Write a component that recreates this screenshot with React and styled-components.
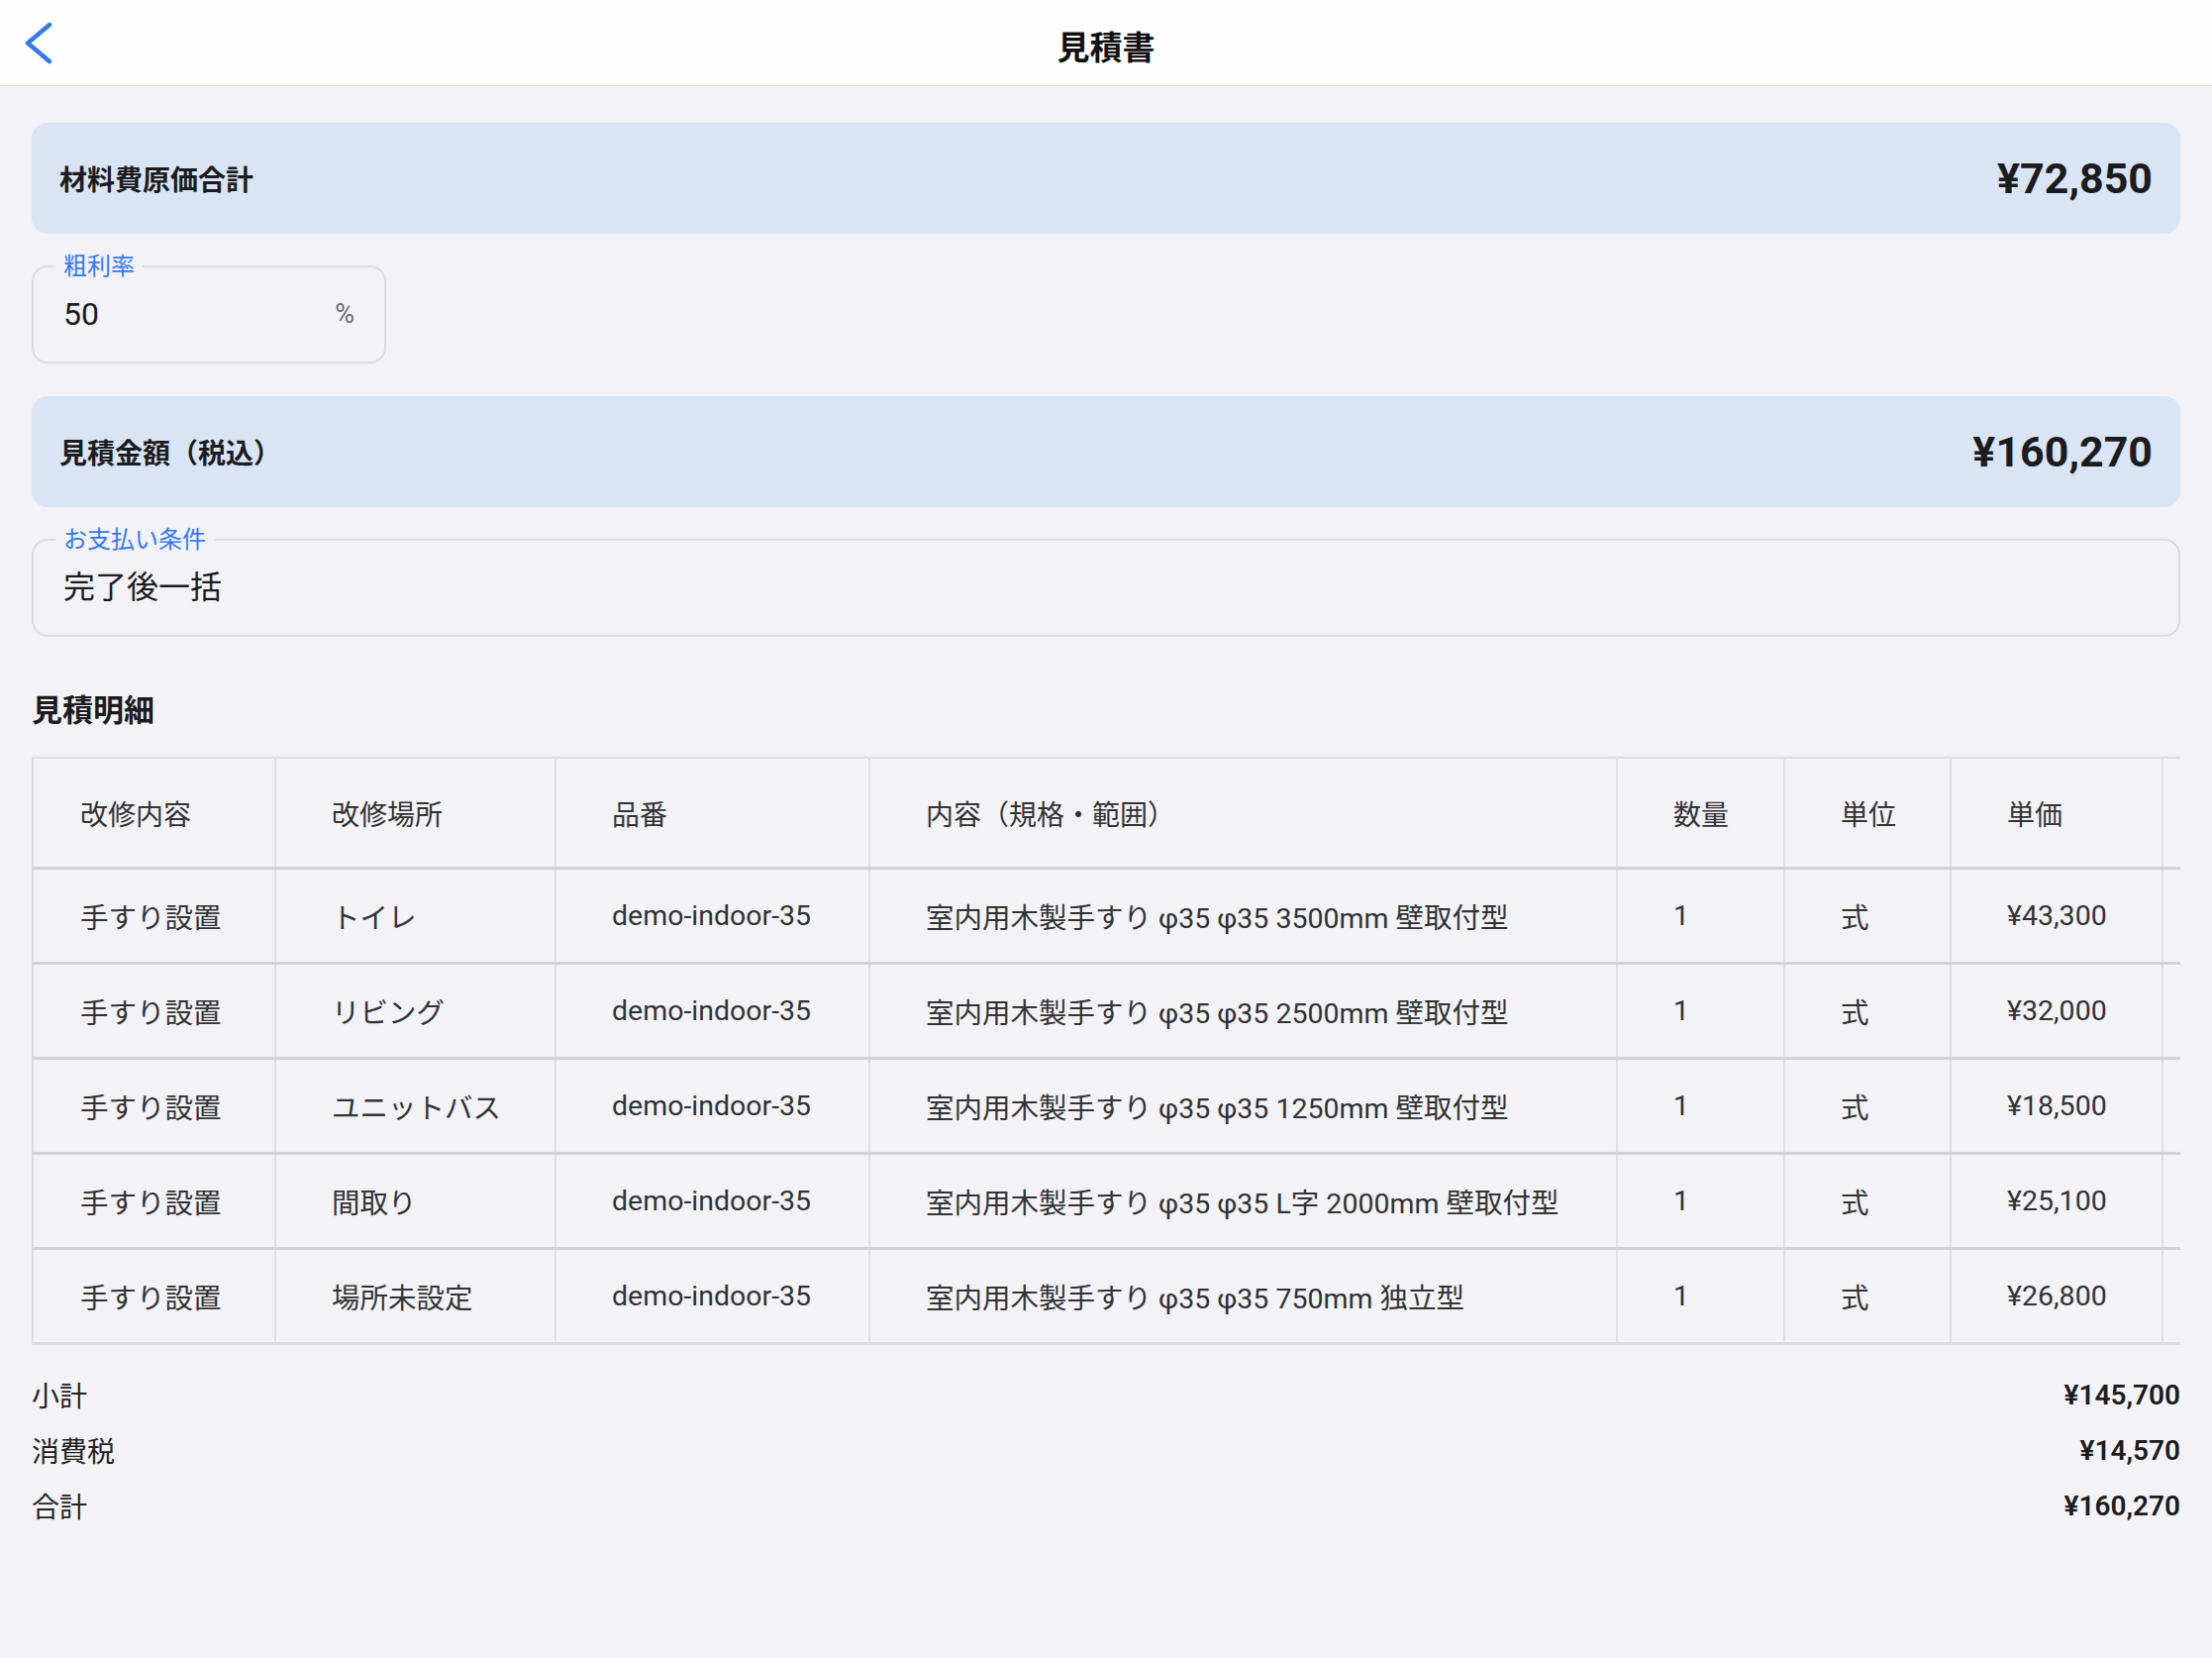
import React from "react";
import styled, { createGlobalStyle } from "styled-components";

const GlobalStyle = createGlobalStyle`
  body {
    margin: 0;
    background-color: #f2f2f7;
    font-family: Roboto, "Noto Sans CJK JP", sans-serif;
    color: #1c1c1e;
  }
`;

const Page = styled.div`
  min-height: 1674px;
  background-color: #f2f2f7;
`;

const Header = styled.header`
  display: grid;
  grid-template-columns: 1fr auto 1fr;
  align-items: center;
  height: 86px;
  padding: 0 24px;
  background-color: #fefefe;
  border-bottom: 1px solid #d6d6da;
`;

const BackButton = styled.button`
  justify-self: start;
  display: flex;
  padding: 0;
  border: none;
  background: none;
  cursor: pointer;
`;

const Title = styled.h1`
  margin: 0;
  padding-top: 6px;
  font-size: 33px;
  font-weight: 700;
  color: #111;
`;

const Content = styled.main`
  display: flex;
  flex-direction: column;
  padding: 37px 32px 0;
`;

const SummaryCard = styled.div`
  display: flex;
  justify-content: space-between;
  align-items: center;
  height: 112px;
  margin-top: ${props => props.top || 0}px;
  padding: 0 28px;
  border-radius: 16px;
  background-color: #d9e4f5;
`;

const CardLabel = styled.span`
  font-size: 28px;
  font-weight: 700;
  color: #1c1c1e;
`;

const CardValue = styled.span`
  font-size: 43px;
  font-weight: 700;
  color: #1c1c1e;
`;

const Field = styled.fieldset`
  width: ${props => props.width || "auto"};
  box-sizing: border-box;
  margin: ${props => props.top || 0}px 0 0;
  padding: 16px 22px 30px;
  min-inline-size: 0;
  border: 2px solid #dcdce0;
  border-radius: 16px;
`;

const FieldLabel = styled.legend`
  padding: 0 8px;
  font-size: 24px;
  line-height: 28px;
  color: #3478f6;
`;

const FieldValue = styled.div`
  display: flex;
  justify-content: space-between;
  align-items: center;
  padding: 0 8px;
  font-size: 32px;
  line-height: 36px;
  color: #1c1c1e;
`;

const Unit = styled.span`
  font-size: 27px;
  color: #6b6b70;
`;

const SectionTitle = styled.h2`
  margin: 55px 0 0;
  font-size: 31px;
  line-height: 40px;
  font-weight: 700;
  color: #1c1c1e;
`;

const TableScroll = styled.div`
  margin-top: 26px;
  overflow: hidden;
`;

const Table = styled.table`
  width: 2411px;
  table-layout: fixed;
  border-collapse: collapse;
  border-top: 2px solid #dcdce0;
  border-left: 2px solid #dcdce0;
`;

const HeadCell = styled.th`
  height: 109px;
  padding: 0 0 0 ${props => (props.first ? 47 : 56)}px;
  text-align: left;
  font-size: 28px;
  font-weight: 400;
  color: #333;
  border-right: 2px solid #e0e0e4;
  border-bottom: 3px solid #d1d1d6;
`;

const Cell = styled.td`
  height: 93px;
  padding: 0 0 0 ${props => (props.first ? 47 : 56)}px;
  font-size: 28.5px;
  color: #333;
  white-space: nowrap;
  border-right: 2px solid #e0e0e4;
  border-bottom: 3px solid ${props => (props.last ? "#dcdce0" : "#d1d1d6")};
`;

const Totals = styled.div`
  display: flex;
  flex-direction: column;
  margin-top: 22px;
`;

const TotalRow = styled.div`
  display: flex;
  justify-content: space-between;
  align-items: center;
  height: 56px;
  font-size: 28px;
`;

const TotalLabel = styled.span`
  color: #222;
`;

const TotalValue = styled.span`
  font-weight: 600;
  color: #1c1c1e;
`;

const columns = [
  { title: "改修内容", width: 245 },
  { title: "改修場所", width: 283 },
  { title: "品番", width: 317 },
  { title: "内容（規格・範囲）", width: 755 },
  { title: "数量", width: 169 },
  { title: "単位", width: 168 },
  { title: "単価", width: 214 },
  { title: "金額", width: 260 }
];

const rows = [
  ["手すり設置", "トイレ", "demo-indoor-35", "室内用木製手すり φ35 φ35 3500mm 壁取付型", "1", "式", "¥43,300", "¥43,300"],
  ["手すり設置", "リビング", "demo-indoor-35", "室内用木製手すり φ35 φ35 2500mm 壁取付型", "1", "式", "¥32,000", "¥32,000"],
  ["手すり設置", "ユニットバス", "demo-indoor-35", "室内用木製手すり φ35 φ35 1250mm 壁取付型", "1", "式", "¥18,500", "¥18,500"],
  ["手すり設置", "間取り", "demo-indoor-35", "室内用木製手すり φ35 φ35 L字 2000mm 壁取付型", "1", "式", "¥25,100", "¥25,100"],
  ["手すり設置", "場所未設定", "demo-indoor-35", "室内用木製手すり φ35 φ35 750mm 独立型", "1", "式", "¥26,800", "¥26,800"]
];

const totals = [
  ["小計", "¥145,700"],
  ["消費税", "¥14,570"],
  ["合計", "¥160,270"]
];

function ChevronLeft() {
  return (
    <svg width="30" height="44" viewBox="0 0 30 44">
      <polyline
        points="26,4 4,22.5 26,41"
        fill="none"
        stroke="#3478f6"
        strokeWidth="4.5"
        strokeLinecap="round"
        strokeLinejoin="round"
      />
    </svg>
  );
}

export default function App() {
  return (
    <Page>
      <GlobalStyle />
      <Header>
        <BackButton aria-label="戻る">
          <ChevronLeft />
        </BackButton>
        <Title>見積書</Title>
        <span />
      </Header>

      <Content>
        <SummaryCard>
          <CardLabel>材料費原価合計</CardLabel>
          <CardValue>¥72,850</CardValue>
        </SummaryCard>

        <Field width="358px" top={19}>
          <FieldLabel>粗利率</FieldLabel>
          <FieldValue>
            <span>50</span>
            <Unit>%</Unit>
          </FieldValue>
        </Field>

        <SummaryCard top={33}>
          <CardLabel>見積金額（税込）</CardLabel>
          <CardValue>¥160,270</CardValue>
        </SummaryCard>

        <Field top={19}>
          <FieldLabel>お支払い条件</FieldLabel>
          <FieldValue>
            <span>完了後一括</span>
          </FieldValue>
        </Field>

        <SectionTitle>見積明細</SectionTitle>

        <TableScroll>
          <Table>
            <colgroup>
              {columns.map(col => (
                <col key={col.title} style={{ width: col.width }} />
              ))}
            </colgroup>
            <thead>
              <tr>
                {columns.map((col, i) => (
                  <HeadCell key={col.title} first={i === 0}>
                    {col.title}
                  </HeadCell>
                ))}
              </tr>
            </thead>
            <tbody>
              {rows.map((row, r) => (
                <tr key={r}>
                  {row.map((value, i) => (
                    <Cell key={i} first={i === 0} last={r === rows.length - 1}>
                      {value}
                    </Cell>
                  ))}
                </tr>
              ))}
            </tbody>
          </Table>
        </TableScroll>

        <Totals>
          {totals.map(([label, value]) => (
            <TotalRow key={label}>
              <TotalLabel>{label}</TotalLabel>
              <TotalValue>{value}</TotalValue>
            </TotalRow>
          ))}
        </Totals>
      </Content>
    </Page>
  );
}
